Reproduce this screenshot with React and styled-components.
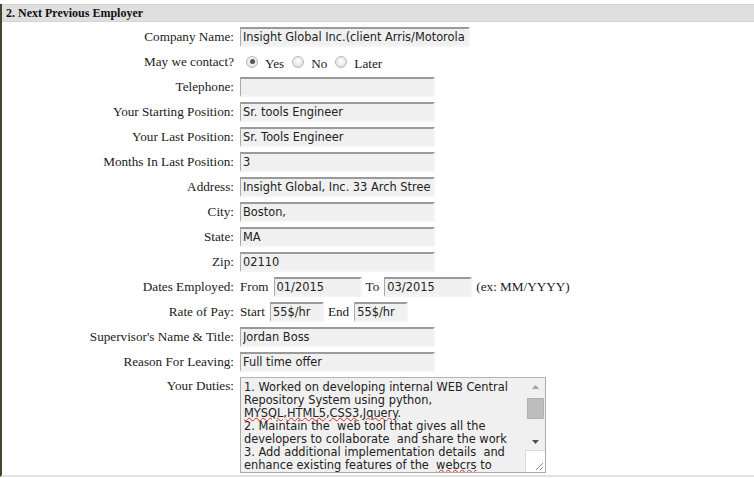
import styled, { createGlobalStyle } from "styled-components";

const GlobalStyle = createGlobalStyle`
  body {
    margin: 0;
    background: #fff;
    font-family: "Liberation Serif", "Times New Roman", serif;
  }
`;

const duties = [
  ["1. Worked on developing internal WEB Central"],
  ["Repository System using python,"],
  [{ typo: "MYSQL,HTML5,CSS3,Jquery" }, "."],
  ["2. Maintain the  web tool that gives all the"],
  ["developers to collaborate  and share the work"],
  ["3. Add additional implementation details  and"],
  ["enhance existing features of the  ", { typo: "webcrs" }, " to"],
];

function App() {
  return (
    <>
      <GlobalStyle />
      <Page>
        <Section>
          <Header>2. Next Previous Employer</Header>
          <Form>
            <Label>Company Name:</Label>
            <Field>
              <Input $w={230} defaultValue="Insight Global Inc.(client Arris/Motorola" />
            </Field>

            <Label>May we contact?</Label>
            <Field>
              <Radio $checked />
              <Choice>Yes</Choice>
              <Radio />
              <Choice>No</Choice>
              <Radio />
              <Choice>Later</Choice>
            </Field>

            <Label>Telephone:</Label>
            <Field>
              <Input defaultValue="" />
            </Field>

            <Label>Your Starting Position:</Label>
            <Field>
              <Input defaultValue="Sr. tools Engineer" />
            </Field>

            <Label>Your Last Position:</Label>
            <Field>
              <Input defaultValue="Sr. Tools Engineer" />
            </Field>

            <Label>Months In Last Position:</Label>
            <Field>
              <Input defaultValue="3" />
            </Field>

            <Label>Address:</Label>
            <Field>
              <Input defaultValue="Insight Global, Inc. 33 Arch Street" />
            </Field>

            <Label>City:</Label>
            <Field>
              <Input defaultValue="Boston," />
            </Field>

            <Label>State:</Label>
            <Field>
              <Input defaultValue="MA" />
            </Field>

            <Label>Zip:</Label>
            <Field>
              <Input defaultValue="02110" />
            </Field>

            <Label>Dates Employed:</Label>
            <Field>
              <Text>From</Text>
              <Input $w={88} defaultValue="01/2015" />
              <Text>To</Text>
              <Input $w={88} defaultValue="03/2015" />
              <Text>(ex: MM/YYYY)</Text>
            </Field>

            <Label>Rate of Pay:</Label>
            <Field>
              <Text>Start</Text>
              <Input $w={54} defaultValue="55$/hr" />
              <Text>End</Text>
              <Input $w={54} defaultValue="55$/hr" />
            </Field>

            <Label>Supervisor's Name &amp; Title:</Label>
            <Field>
              <Input defaultValue="Jordan Boss" />
            </Field>

            <Label>Reason For Leaving:</Label>
            <Field>
              <Input defaultValue="Full time offer" />
            </Field>

            <Label $top>Your Duties:</Label>
            <Field $top>
              <TextArea>
                <TextBody>
                  {duties.map((line, i) => (
                    <Line key={i}>
                      {line.map((part, j) =>
                        typeof part === "string" ? (
                          part
                        ) : (
                          <Typo key={j}>{part.typo}</Typo>
                        )
                      )}
                    </Line>
                  ))}
                </TextBody>
                <ScrollBar>
                  <Arrow>
                    <svg width="7" height="4" viewBox="0 0 7 4">
                      <path d="M0 4 L3.5 0 L7 4 Z" fill="#a3a3a3" />
                    </svg>
                  </Arrow>
                  <Track>
                    <Thumb />
                  </Track>
                  <Arrow>
                    <svg width="7" height="4" viewBox="0 0 7 4">
                      <path d="M0 0 L3.5 4 L7 0 Z" fill="#505050" />
                    </svg>
                  </Arrow>
                  <Grip>
                    <svg width="8" height="8" viewBox="0 0 8 8">
                      <path d="M1 8 L8 1 M5 8 L8 5" stroke="#8a8a8a" strokeWidth="1" />
                    </svg>
                  </Grip>
                </ScrollBar>
              </TextArea>
            </Field>
          </Form>
        </Section>
      </Page>
    </>
  );
}

export default App;

const Page = styled.div`
  width: 754px;
  height: 478px;
  padding-top: 4px;
  box-sizing: border-box;
  overflow: hidden;
`;

const Section = styled.div`
  border-left: 2px solid #45452f;
  border-bottom: 2px solid #e2e2e2;
  height: 473px;
  box-sizing: border-box;
`;

const Header = styled.div`
  height: 18px;
  box-sizing: border-box;
  background: #dfdfdf;
  border-top: 1px solid #d4d4d4;
  border-bottom: 1px solid #d4d4d4;
  padding: 1px 4px 0;
  font-size: 12px;
  font-weight: bold;
  line-height: 15px;
  color: #111;
`;

const Form = styled.div`
  display: grid;
  grid-template-columns: 232px 1fr;
  grid-auto-rows: 25px;
  column-gap: 6px;
  padding-top: 2px;
`;

const Label = styled.div`
  display: flex;
  align-items: ${(p) => (p.$top ? "flex-start" : "center")};
  justify-content: flex-end;
  padding-top: ${(p) => (p.$top ? "4px" : "0")};
  font-size: 13.2px;
  color: #1a1a1a;
  white-space: nowrap;
`;

const Field = styled.div`
  display: flex;
  align-items: ${(p) => (p.$top ? "flex-start" : "center")};
  gap: 4px;
  padding-top: ${(p) => (p.$top ? "3px" : "0")};
  font-size: 13.2px;
  color: #1a1a1a;
`;

const Text = styled.span`
  white-space: nowrap;
  margin-right: 1px;
`;

const Choice = styled.span`
  white-space: nowrap;
  padding-top: 4px;
  margin: 0 2px 0 3px;
`;

const Input = styled.input`
  width: ${(p) => p.$w || 195}px;
  height: 20px;
  box-sizing: border-box;
  margin: 0;
  padding: 1px 2px 0;
  background: #f0f0f0;
  border: 2px solid #f0f0f0;
  border-top-color: #9a9a9a;
  border-left-color: #a8a8a8;
  border-left-width: 1px;
  border-right-color: #f4f4f4;
  border-bottom-color: #f4f4f4;
  font-family: "DejaVu Sans", Verdana, sans-serif;
  font-size: 11.4px;
  color: #222;
  outline: none;
`;

const Radio = styled.span`
  width: 12px;
  height: 12px;
  box-sizing: border-box;
  margin-left: 2px;
  border-radius: 50%;
  border: 1px solid #b8b8b8;
  background: radial-gradient(circle at 50% 40%, #ffffff 0%, #e8e8e8 60%, #d0d0d0 100%);
  position: relative;
  &:first-child {
    margin-left: 6px;
  }
  &::after {
    content: "";
    display: ${(p) => (p.$checked ? "block" : "none")};
    position: absolute;
    left: 2.5px;
    top: 2.5px;
    width: 5px;
    height: 5px;
    border-radius: 50%;
    background: #555;
  }
`;

const TextArea = styled.div`
  width: 306px;
  height: 96px;
  box-sizing: border-box;
  display: flex;
  border: 1px solid #a9a9a9;
  border-top-color: #b5b5b5;
  background: #f0f0f0;
  overflow: hidden;
`;

const TextBody = styled.div`
  flex: 1;
  padding: 3px 2px 0 3px;
  font-family: "DejaVu Sans", Verdana, sans-serif;
  font-size: 11.4px;
  line-height: 13px;
  color: #222;
  white-space: pre;
  overflow: hidden;
`;

const Line = styled.div``;

const Typo = styled.span`
  text-decoration: underline wavy #e02020;
  text-decoration-thickness: 1px;
  text-underline-offset: 0px;
`;

const ScrollBar = styled.div`
  width: 20px;
  flex-shrink: 0;
  display: flex;
  flex-direction: column;
  background: #f0f0f0;
`;

const Arrow = styled.div`
  height: 17px;
  display: flex;
  align-items: center;
  justify-content: center;
`;

const Track = styled.div`
  flex: 1;
  padding: 3px 1px 0 2px;
`;

const Thumb = styled.div`
  height: 21px;
  background: #bdbdbd;
  border: 1px solid #b0b0b0;
  box-sizing: border-box;
`;

const Grip = styled.div`
  height: 22px;
  background: #fff;
  border-top: 1px solid #dadada;
  border-left: 1px solid #dadada;
  display: flex;
  align-items: flex-end;
  justify-content: flex-end;
  padding: 0 2px 2px 0;
  box-sizing: border-box;
`;
